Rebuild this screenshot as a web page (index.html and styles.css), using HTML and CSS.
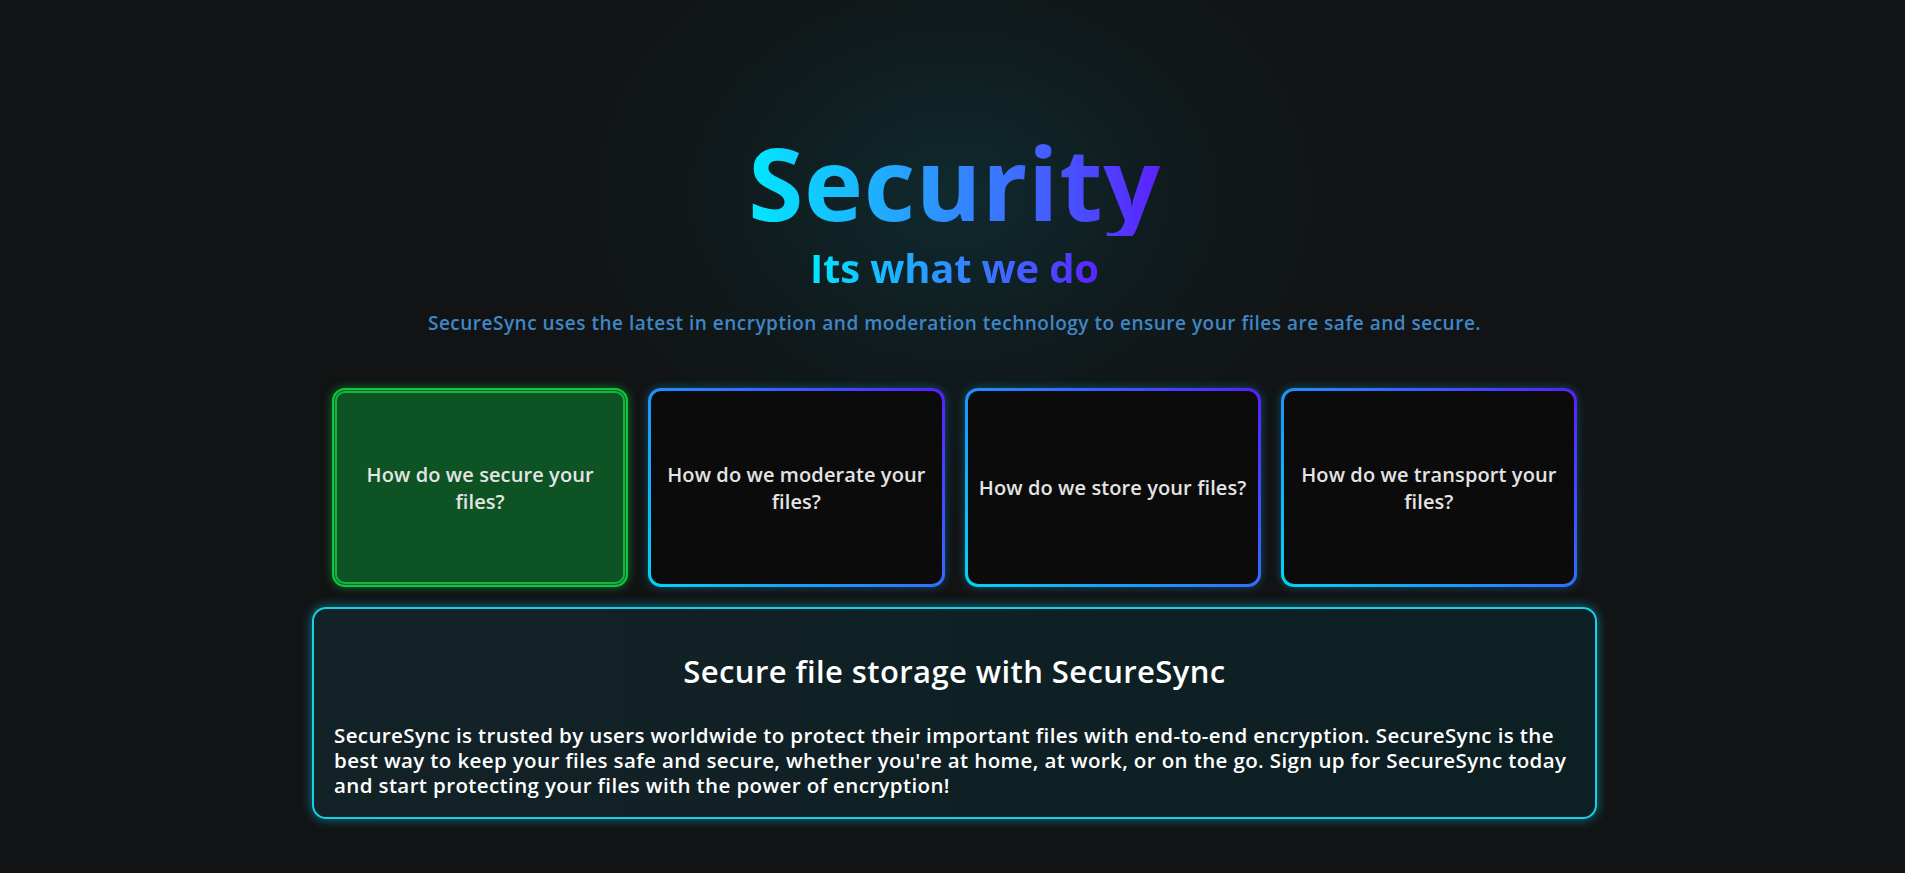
FILE: index.html
```html
<!DOCTYPE html>
<html lang="en">
<head>
<meta charset="utf-8">
<title>Security - SecureSync</title>
<link rel="stylesheet" href="styles.css">
</head>
<body>
<main class="page">
  <header class="hero">
    <h1 class="hero-title">Security</h1>
    <h2 class="hero-sub">Its what we do</h2>
    <p class="hero-desc">SecureSync uses the latest in encryption and moderation technology to ensure your files are safe and secure.</p>
  </header>
  <section class="wrap">
    <div class="cards">
      <div class="card card-active">How do we secure your files?</div>
      <div class="card">How do we moderate your files?</div>
      <div class="card">How do we store your files?</div>
      <div class="card">How do we transport your files?</div>
    </div>
    <div class="panel">
      <h3 class="panel-title">Secure file storage with SecureSync</h3>
      <p class="panel-text">SecureSync is trusted by users worldwide to protect their important files with end-to-end encryption. SecureSync is the best way to keep your files safe and secure, whether you're at home, at work, or on the go. Sign up for SecureSync today and start protecting your files with the power of encryption!</p>
    </div>
  </section>
</main>
</body>
</html>
```
FILE: styles.css
```css
html, body {
  margin: 0;
  padding: 0;
}
body {
  min-height: 873px;
  background: radial-gradient(ellipse 440px 340px at 954px 195px, #0f2a2f 0%, #10191b 55%, #121314 100%), #131313;
  background-color: #131313;
  font-family: "Open Sans", "Noto Sans", sans-serif;
  color: #fff;
}
.page {
  display: flex;
  flex-direction: column;
  align-items: center;
  padding-top: 128px;
  padding-left: 4px;
}
.hero {
  display: flex;
  flex-direction: column;
  align-items: center;
  text-align: center;
}
.hero-title {
  margin: 0;
  font-size: 100px;
  line-height: 108px;
  font-weight: 700;
  letter-spacing: 0.6px;
  background: linear-gradient(90deg, #00e8ff 0%, #1fb0ff 30%, #3b74ff 62%, #5a22ff 100%);
  -webkit-background-clip: text;
  background-clip: text;
  color: transparent;
}
.hero-sub {
  margin: 7px 0 0;
  font-size: 40px;
  line-height: 50px;
  font-weight: 700;
  letter-spacing: -0.2px;
  background: linear-gradient(90deg, #00e8ff 0%, #1fb0ff 30%, #3b74ff 62%, #5a22ff 100%);
  -webkit-background-clip: text;
  background-clip: text;
  color: transparent;
}
.hero-desc {
  margin: 17px 0 0;
  font-size: 19px;
  line-height: 27px;
  font-weight: 600;
  letter-spacing: 0.5px;
  color: #3f87c6;
}
.wrap {
  width: 1285px;
  margin-top: 51px;
  display: flex;
  flex-direction: column;
  gap: 20px;
}
.cards {
  display: grid;
  grid-template-columns: repeat(4, 1fr);
  gap: 20px;
  padding: 0 20px;
}
.card {
  height: 199px;
  box-sizing: border-box;
  border: 3px solid transparent;
  border-radius: 13px;
  background: linear-gradient(#0b0b0b, #0b0b0b) padding-box,
              linear-gradient(45deg, #00d6f2 0%, #2a7fff 50%, #5a1dff 100%) border-box;
  box-shadow: 0 0 10px rgba(0, 190, 255, 0.35);
  display: flex;
  align-items: center;
  justify-content: center;
  text-align: center;
  padding: 0 3px;
  font-size: 20px;
  line-height: 27px;
  font-weight: 600;
  letter-spacing: 0.1px;
  color: #e4e4e4;
}
.card-active {
  background: #0d5324;
  border: 2px solid #10c642;
  box-shadow: 0 0 10px rgba(0, 200, 60, 0.55), inset 0 0 0 1px #0b6a2a, inset 0 0 0 3px #15b440;
  padding: 0 22px;
}
.panel {
  box-sizing: border-box;
  height: 212px;
  border: 2px solid #17cfe6;
  border-radius: 14px;
  background: linear-gradient(90deg, #132227 0%, #0c1f22 100%);
  box-shadow: 0 0 12px rgba(0, 210, 240, 0.55);
  padding: 40px 20px 18px;
}
.panel-title {
  margin: 0 0 30px;
  text-align: center;
  font-size: 31px;
  line-height: 44px;
  font-weight: 600;
  letter-spacing: 0.4px;
  color: #fff;
}
.panel-text {
  margin: 0;
  font-size: 20.5px;
  line-height: 25px;
  font-weight: 600;
  letter-spacing: 0.38px;
  color: #fff;
}
```
